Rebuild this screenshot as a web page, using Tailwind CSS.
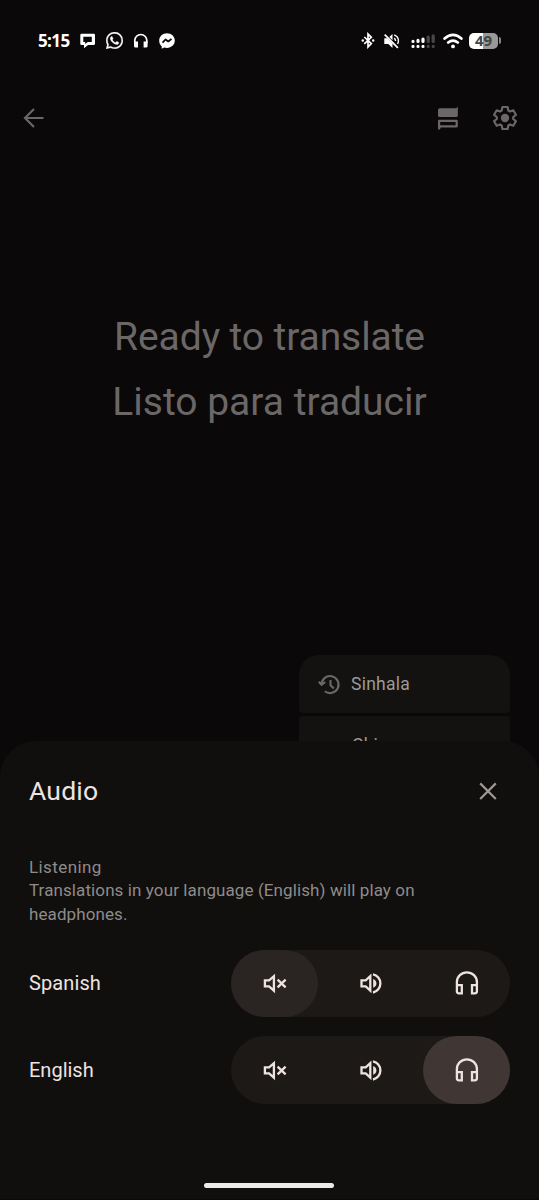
<!DOCTYPE html>
<html lang="en">
<head>
<meta charset="utf-8">
<title>Audio</title>
<script src="https://cdn.jsdelivr.net/npm/@tailwindcss/browser@4"></script>
</head>
<body class="bg-[#0a0809]">
<svg class="hidden">
  <symbol id="mute" viewBox="0 0 28 28"><g fill="none" stroke="currentColor" stroke-width="2.3"><path d="M3.9 11.4h4.200l4.800-4.200v14.400l-4.800-4.200H3.900z"/><path d="M16.600 10.600l8 7.800m0-7.800l-8 7.800"/></g></symbol>
  <symbol id="volume" viewBox="0 0 28 28"><path fill="none" stroke="currentColor" stroke-width="2.300" d="M4.500 11.400h4.200l4.600-4.200v14.400l-4.600-4.200H4.500zM16 5.300a9.300 9.300 0 0 1 0 18.200"/><path fill="currentColor" d="M16.200 10c2 .900 3.200 2.400 3.200 4.400s-1.200 3.500-3.200 4.400z"/></symbol>
  <symbol id="phones" viewBox="0 0 28 28"><path fill="none" stroke="currentColor" stroke-width="2.300" d="M3.900 16.200v-3.200a10 9.700 0 0 1 20 0v3.200M3.900 16.200h4.900v8.100H5.900a2 2 0 0 1-2-2zM23.900 16.200H19v8.100h2.900a2 2 0 0 0 2-2z"/></symbol>
</svg>
<div class="relative flex h-[1200px] w-[539px] flex-col overflow-hidden bg-[#0a0809] font-['Roboto',sans-serif]">
  <header class="flex h-[81px] items-center justify-between pl-[38px] pr-[38px] text-white">
    <div class="flex items-center">
      <span class="w-[42px] whitespace-nowrap font-['Open_Sans',sans-serif] text-[17px] font-bold leading-none tracking-[-0.6px]">5:15</span>
      <svg class="size-[16px]" viewBox="0 0 16 16"><path fill="currentColor" fill-rule="evenodd" d="M1.500.800h12.300q1.200 0 1.200 1.200v8.500q0 1.500-1.500 1.500H8L4 15.300V12H1.500Q.300 12 .300 10.800V2Q.300.800 1.500.800zM3.300 3.700v5.400h1.900v2l2.600-2h4V3.700z"/></svg>
      <svg class="ml-[10px] size-[17px]" viewBox="0 0 24 24"><path fill="currentColor" stroke="currentColor" stroke-width=".4" d="M17.472 14.382c-.297-.149-1.758-.867-2.030-.967-.273-.099-.471-.148-.670.150-.197.297-.767.966-.940 1.164-.173.199-.347.223-.644.075-.297-.150-1.255-.463-2.390-1.475-.883-.788-1.480-1.761-1.653-2.059-.173-.297-.018-.458.130-.606.134-.133.298-.347.446-.520.149-.174.198-.298.298-.497.099-.198.050-.371-.025-.520-.075-.149-.669-1.612-.916-2.207-.242-.579-.487-.500-.669-.510-.173-.008-.371-.010-.570-.010-.198 0-.520.074-.792.372-.272.297-1.040 1.016-1.040 2.479 0 1.462 1.065 2.875 1.213 3.074.149.198 2.096 3.200 5.077 4.487.709.306 1.262.489 1.694.625.712.227 1.360.195 1.871.118.571-.085 1.758-.719 2.006-1.413.248-.694.248-1.289.173-1.413-.074-.124-.272-.198-.570-.347m-5.421 7.403h-.004a9.870 9.870 0 01-5.031-1.378l-.361-.214-3.741.982.998-3.648-.235-.374a9.860 9.860 0 01-1.510-5.260c.001-5.450 4.436-9.884 9.888-9.884 2.640 0 5.122 1.030 6.988 2.898a9.825 9.825 0 012.893 6.994c-.003 5.450-4.437 9.884-9.885 9.884m8.413-18.297A11.815 11.815 0 0012.050 0C5.495 0 .160 5.335.157 11.892c0 2.096.547 4.142 1.588 5.945L.057 24l6.305-1.654a11.882 11.882 0 005.683 1.448h.005c6.554 0 11.890-5.335 11.893-11.893a11.821 11.821 0 00-3.480-8.413z"/></svg>
      <svg class="ml-[10px] size-[16px]" viewBox="0 0 16 16"><path fill="none" stroke="currentColor" stroke-width="1.700" d="M1.800 10V7.500a6 6 0 0 1 12 0V10"/><path fill="currentColor" d="M1 8.500h4v6H2.500A1.500 1.500 0 0 1 1 13zM14.600 8.500h-4v6h2.500a1.500 1.500 0 0 0 1.500-1.500z"/></svg>
      <svg class="ml-[10px] size-[16px]" viewBox="0 0 16 16"><path fill="currentColor" d="M8 .300C3.600.300.200 3.400.200 7.700c0 2.300 1 4.200 2.500 5.500v2.600l2.500-1.300q1.300.400 2.800.400c4.400 0 7.800-3.100 7.800-7.300S12.400.300 8 .300z"/><path d="M3.500 9.700l3-3.200 2.800 2 3.200-2.700" fill="none" stroke="#0a0809" stroke-width="1.700" stroke-linejoin="round"/></svg>
    </div>
    <div class="flex items-center">
      <svg class="h-[17px] w-[14px]" viewBox="0 0 14 17"><path d="M3.300 5l7 6.600L7 15V2l3.300 3.300-7 6.500" fill="none" stroke="currentColor" stroke-width="1.700"/><circle cx="1.800" cy="8.500" r="1.200" fill="currentColor"/><circle cx="12.200" cy="8.500" r="1.200" fill="currentColor"/></svg>
      <svg class="ml-[9px] size-[16px]" viewBox="0 0 16 16"><path fill="currentColor" d="M.300 5.300h3L8.500 10.500v4.500L4.300 10.900H.300zM5.300 4L8.500.900v6.300z"/><path d="M.700 1.700l13.200 13.200" fill="none" stroke="currentColor" stroke-width="1.800"/><path d="M10.200 5.200q1.300.900 1.400 2.800M10.200 1.800q4.500 1.800 4.200 6.500-.200 1.400-.900 2.500" fill="none" stroke="currentColor" stroke-width="1.400"/></svg>
      <svg class="ml-[11px] h-[16px] w-[24px]" viewBox="0 0 24 16"><g stroke="currentColor" stroke-width="3.200" stroke-linecap="round"><path d="M2 8.400v.1M7 7.400v1.100M12 6v2.500M2 13.400v.1M7 13.400v.1M12 13.400v.1"/><path d="M17.200 4v4.500M22.200 2.800v5.700M17.200 13.400v.1M22.200 13.400v.1" stroke="#484647"/></g></svg>
      <svg class="ml-[8px] h-[16px] w-[20px]" viewBox="0 0 20 16"><g fill="none" stroke="currentColor" stroke-width="2.700" stroke-linecap="round"><path d="M1.600 5.500Q10-1.700 18.400 5.500M5.200 9.500Q10 5.600 14.800 9.500"/></g><circle cx="10" cy="13.400" r="1.900" fill="currentColor"/></svg>
      <span class="ml-[6px] flex h-[16px] w-[29px] items-center justify-center rounded-[5px] bg-linear-to-r from-white from-50% to-[#999] to-50% font-['Open_Sans',sans-serif] text-[15px] font-bold leading-none text-[#444]">49</span>
      <span class="ml-px h-[7px] w-[2px] rounded-r bg-[#888]"></span>
    </div>
  </header>

  <nav class="flex h-[74px] items-center justify-between pl-[22px] pr-[21px] text-[#6b6766]">
    <svg class="size-[24px]" viewBox="0 0 24 24"><path d="M21.500 12H3.500M12 3L3 12l9 9" fill="none" stroke="currentColor" stroke-width="2.200"/></svg>
    <div class="flex items-center gap-[32px]">
      <svg class="size-[24px]" viewBox="0 0 24 24"><path fill="currentColor" d="M21.800.600v9q0 1.500-1.500 1.500H3.700Q2 11.100 2 9.400V4q0-1.700 1.700-1.700h16q1.200-.200 2.100-1.700z"/><path d="M3.100 22.500V14.900h17.600v5.400H4.300z" fill="none" stroke="currentColor" stroke-width="2.200" stroke-linejoin="round"/></svg>
      <svg class="size-[26px]" viewBox="0 0 26 26"><path fill="none" stroke="currentColor" stroke-width="2.200" stroke-linejoin="round" d="M10.400 2h5.200l.7 3.500 1.700 1 3.300-1.200 2.600 4.500-2.700 2.200v2l2.700 2.200-2.600 4.500-3.300-1.200-1.700 1-.7 3.500h-5.200l-.7-3.500-1.700-1-3.300 1.200-2.600-4.500L4.800 14v-2L2.100 9.800l2.600-4.500L8 6.500l1.700-1z"/><circle cx="13" cy="13" r="4.200" fill="currentColor"/></svg>
    </div>
  </nav>

  <main class="flex flex-1 flex-col pt-[150px]">
    <div class="flex flex-col items-center text-[39px] font-normal leading-[65px] text-[#6b6766]">
      <h1 class="whitespace-nowrap tracking-[-0.1px]">Ready to translate</h1>
      <h1 class="whitespace-nowrap">Listo para traducir</h1>
    </div>
    <div class="mt-[220px] mr-[29px] ml-[299px] flex flex-col gap-[3px] text-[17.500px] tracking-[0.250px] text-[#9d9997]">
      <div class="flex h-[58px] items-center gap-[10px] rounded-t-[20px] rounded-b-[4px] bg-[#131210] pl-[19px]">
        <svg class="size-[23px] text-[#6b6766]" viewBox="0 0 23 23"><path d="M3.600 12A8.500 8.500 0 1 1 6.800 18.200M.800 8.700l2.800 3.100L7.300 9M12.500 7v5.200l3.400 3.300" fill="none" stroke="currentColor" stroke-width="2.100"/></svg>
        <span>Sinhala</span>
      </div>
      <div class="flex h-[58px] items-center rounded-[4px] bg-[#131210] pl-[53px]">Chinese</div>
    </div>
  </main>

  <section class="absolute inset-x-0 top-[741px] flex h-[458px] flex-col rounded-t-[36px] bg-[#100f0d] px-[29px] text-[#ede4e1]">
    <div class="flex h-[100px] items-center justify-between pr-[12px]">
      <h2 class="text-[26.500px] leading-none tracking-[0.2px]">Audio</h2>
      <svg class="size-[20px] text-[#9d9997]" viewBox="0 0 20 20"><path d="M2.200 2.400l15.600 15.600m0-15.600L2.200 18" fill="none" stroke="currentColor" stroke-width="2.200"/></svg>
    </div>
    <div class="mt-[14px] h-[95px] text-[17px] leading-[24px] tracking-[0.1px] text-[#8f8b89]">
      <h3 class="h-[23px] tracking-[0.400px]">Listening</h3>
      <p class="whitespace-nowrap">Translations in your language (English) will play on<br>headphones.</p>
    </div>
    <div class="flex flex-col gap-[19px] text-[20px]">
      <div class="flex h-[67px] items-center justify-between">
        <span class="pb-[2px] tracking-[0.1px]">Spanish</span>
        <div class="flex h-full w-[279px] justify-between rounded-full bg-[#1d1916]">
          <span class="flex w-[87px] items-center justify-center rounded-full bg-[#2a2523] pb-px"><svg class="size-[28px]"><use href="#mute"/></svg></span>
          <span class="flex w-[87px] items-center justify-center pb-px"><svg class="size-[28px]"><use href="#volume"/></svg></span>
          <span class="flex w-[87px] items-center justify-center pb-px"><svg class="size-[28px]"><use href="#phones"/></svg></span>
        </div>
      </div>
      <div class="flex h-[68px] items-center justify-between">
        <span>English</span>
        <div class="flex h-full w-[279px] justify-between rounded-full bg-[#1d1916]">
          <span class="flex w-[87px] items-center justify-center"><svg class="size-[28px]"><use href="#mute"/></svg></span>
          <span class="flex w-[87px] items-center justify-center"><svg class="size-[28px]"><use href="#volume"/></svg></span>
          <span class="flex w-[87px] items-center justify-center rounded-full bg-[#403735]"><svg class="size-[28px]"><use href="#phones"/></svg></span>
        </div>
      </div>
    </div>
    <div class="mt-auto mb-[11px] ml-[175px] h-[5px] w-[130px] rounded-full bg-[#ede9e8]"></div>
  </section>
</div>
</body>
</html>
